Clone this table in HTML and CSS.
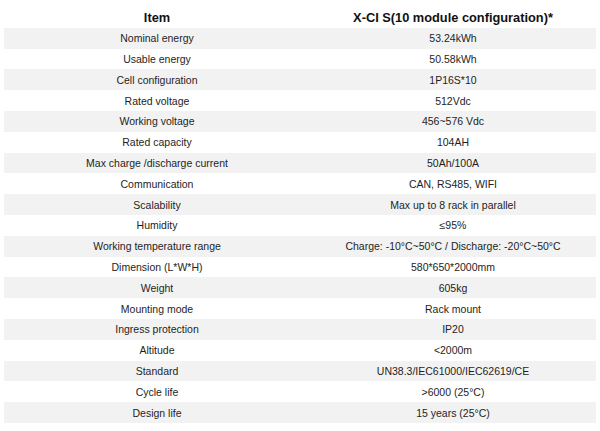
FILE: index.html
```html
<!DOCTYPE html>
<html>
<head>
<meta charset="utf-8">
<link rel="stylesheet" href="styles.css">
</head>
<body>
<table class="spec">
<thead>
<tr><th class="c1">Item</th><th class="c2">X-CI S(10 module configuration)*</th></tr>
</thead>
<tbody>
<tr><td>Nominal energy</td><td>53.24kWh</td></tr>
<tr><td>Usable energy</td><td>50.58kWh</td></tr>
<tr><td>Cell configuration</td><td>1P16S*10</td></tr>
<tr><td>Rated voltage</td><td>512Vdc</td></tr>
<tr><td>Working voltage</td><td>456~576 Vdc</td></tr>
<tr><td>Rated capacity</td><td>104AH</td></tr>
<tr><td>Max charge /discharge current</td><td>50Ah/100A</td></tr>
<tr><td>Communication</td><td>CAN, RS485, WIFI</td></tr>
<tr><td>Scalability</td><td>Max up to 8 rack in parallel</td></tr>
<tr><td>Humidity</td><td>≤95%</td></tr>
<tr><td>Working temperature range</td><td>Charge: -10°C~50°C / Discharge: -20°C~50°C</td></tr>
<tr><td>Dimension (L*W*H)</td><td>580*650*2000mm</td></tr>
<tr><td>Weight</td><td>605kg</td></tr>
<tr><td>Mounting mode</td><td>Rack mount</td></tr>
<tr><td>Ingress protection</td><td>IP20</td></tr>
<tr><td>Altitude</td><td>&lt;2000m</td></tr>
<tr><td>Standard</td><td>UN38.3/IEC61000/IEC62619/CE</td></tr>
<tr><td>Cycle life</td><td>&gt;6000 (25°C)</td></tr>
<tr><td>Design life</td><td>15 years (25°C)</td></tr>
</tbody>
</table>
</body>
</html>
```
FILE: styles.css
```css
html, body {
  margin: 0;
  padding: 0;
  background: #ffffff;
}
body {
  padding: 7px 4px 0 4px;
  font-family: "Liberation Sans", Arial, sans-serif;
  color: #1e1e1e;
}
.spec {
  width: 592px;
  border-collapse: collapse;
  table-layout: fixed;
}
.spec .c1 { width: 306px; }
.spec .c2 { width: 286px; }
.spec th, .spec td {
  padding: 0;
  height: 20.8px;
  text-align: center;
  vertical-align: middle;
  white-space: nowrap;
}
.spec th {
  font-size: 12.8px;
  font-weight: bold;
  color: #111111;
}
.spec td {
  font-size: 10.5px;
}
.spec tbody tr:nth-child(odd) {
  background: #f2f2f2;
}
```
